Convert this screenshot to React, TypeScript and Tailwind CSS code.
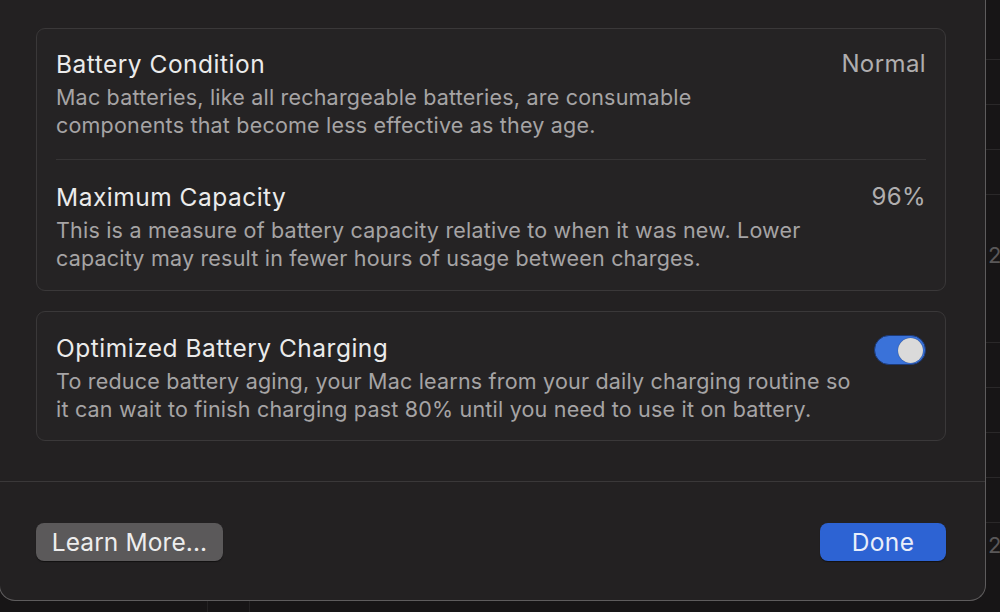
import { useState } from "react";

function Toggle({ on, onChange }: { on: boolean; onChange: (v: boolean) => void }) {
  return (
    <button
      onClick={() => onChange(!on)}
      className={
        "relative flex h-[30px] w-[52px] shrink-0 items-center rounded-full border border-[#1c3a78] p-[2px] " +
        (on ? "justify-end bg-[#3a72d9]" : "justify-start bg-[#4a4849]")
      }
    >
      <span className="h-[25px] w-[25px] rounded-full bg-[#dadada] shadow-[0_0_1px_rgba(0,0,0,0.6)]" />
    </button>
  );
}

function Row({
  title,
  value,
  desc,
  className,
}: {
  title: string;
  value?: React.ReactNode;
  desc: string[];
  className?: string;
}) {
  return (
    <div className={"flex items-start justify-between " + (className ?? "")}>
      <div className="flex flex-col gap-[4px]">
        <div className="text-[24.5px] leading-[30px] tracking-[0.5px] text-[#ebebeb]">{title}</div>
        <div className="text-[21.5px] leading-[28px] tracking-[0.2px] text-[#a6a4a5]">
          {desc.map((line) => (
            <div key={line}>{line}</div>
          ))}
        </div>
      </div>
      {value}
    </div>
  );
}

export default function App() {
  const [optimized, setOptimized] = useState(true);

  return (
    <div className="flex h-[612px] w-[1000px] flex-col overflow-hidden bg-[#171516] font-[family-name:Inter,'Noto_Sans',sans-serif] antialiased">
      <div className="flex">
        {/* sheet */}
        <div className="-ml-px flex h-[601px] w-[987px] shrink-0 flex-col rounded-b-[16px] border border-t-0 border-[#5e5c5d] bg-[#232122]">
          <div className="flex flex-col gap-[20px] pl-[36px] pr-[39px] pt-[28px] pb-[40px]">
            <div className="flex flex-col rounded-[9px] border border-[#3a3839] bg-[#252324] px-[19px]">
              <Row
                className="pt-[20px] pb-[20px] border-b border-[#363435]"
                title="Battery Condition"
                value={<div className="text-[24px] leading-[30px] tracking-[0.4px] text-[#b0aeaf]">Normal</div>}
                desc={[
                  "Mac batteries, like all rechargeable batteries, are consumable",
                  "components that become less effective as they age.",
                ]}
              />
              <Row
                className="pt-[22px] pb-[18px]"
                title="Maximum Capacity"
                value={<div className="text-[24px] leading-[30px] tracking-[0.4px] text-[#b0aeaf]">96%</div>}
                desc={[
                  "This is a measure of battery capacity relative to when it was new. Lower",
                  "capacity may result in fewer hours of usage between charges.",
                ]}
              />
            </div>

            <div className="rounded-[9px] border border-[#3a3839] bg-[#252324] px-[19px]">
              <Row
                className="pt-[21px] pb-[17px]"
                title="Optimized Battery Charging"
                value={
                  <div className="pt-[2px]">
                    <Toggle on={optimized} onChange={setOptimized} />
                  </div>
                }
                desc={[
                  "To reduce battery aging, your Mac learns from your daily charging routine so",
                  "it can wait to finish charging past 80% until you need to use it on battery.",
                ]}
              />
            </div>
          </div>

          <div className="flex items-center justify-between border-t border-[#3a3839] pl-[36px] pr-[39px] pt-[41px] pb-[39px]">
            <button className="h-[38px] w-[187px] rounded-[8px] bg-[#5b595a] text-[24.5px] tracking-[0.1px] text-[#ededed] shadow-[0_1px_1px_rgba(0,0,0,0.5)]">
              Learn More...
            </button>
            <button className="h-[38px] w-[126px] rounded-[8px] bg-[#2d63d3] text-[24.5px] tracking-[0.4px] text-[#e9eefa] shadow-[0_1px_1px_rgba(0,0,0,0.5)]">
              Done
            </button>
          </div>
        </div>

        {/* window behind */}
        <div className="flex flex-1 flex-col pt-[15px]">
          <div className="h-[45px] border-b border-[#2a2829]" />
          <div className="h-[45px] border-b border-[#2a2829]" />
          <div className="h-[45px] border-b border-[#2a2829]" />
          <div className="h-[45px] border-b border-[#2a2829]" />
          <div className="h-[103px] pl-[2px] pt-[46px] text-[22px] leading-[28px] text-[#5a5859]">2</div>
          <div className="h-[45px] border-b border-[#2a2829]" />
          <div className="h-[45px] border-b border-[#2a2829]" />
          <div className="h-[45px] border-b border-[#2a2829]" />
          <div className="h-[45px] border-b border-[#2a2829]" />
          <div className="h-[45px] border-b border-[#2a2829]" />
          <div className="pl-[2px] pt-[8px] text-[22px] leading-[28px] text-[#5a5859]">2</div>
        </div>
      </div>
      <div className="flex flex-1">
        <div className="w-[208px] border-r border-[#242223]" />
        <div className="w-[42px] border-r border-[#242223]" />
      </div>
    </div>
  );
}
